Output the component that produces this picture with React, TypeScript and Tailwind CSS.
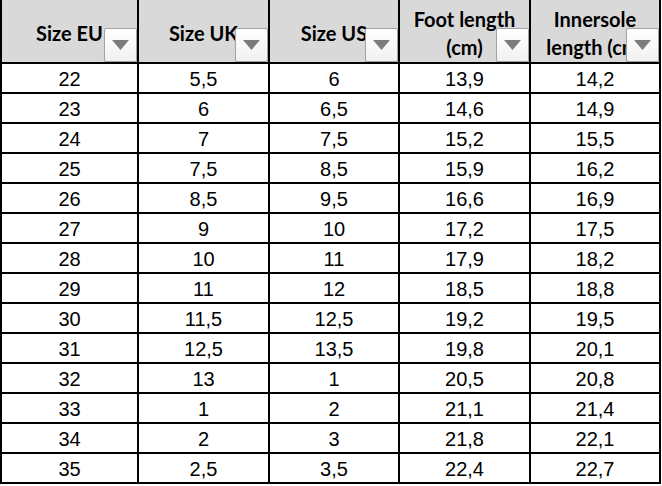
const columns = [
  { label: ["Size EU"], width: "w-[137px]" },
  { label: ["Size UK"], width: "w-[131px]" },
  { label: ["Size US"], width: "w-[130px]" },
  { label: ["Foot length", "(cm)"], width: "w-[131px]" },
  { label: ["Innersole", "length (cm)"], width: "w-[130px]" },
];

const widths = ["w-[137px]", "w-[131px]", "w-[130px]", "w-[131px]", "w-[130px]"];

const rows: string[][] = [
  ["22", "5,5", "6", "13,9", "14,2"],
  ["23", "6", "6,5", "14,6", "14,9"],
  ["24", "7", "7,5", "15,2", "15,5"],
  ["25", "7,5", "8,5", "15,9", "16,2"],
  ["26", "8,5", "9,5", "16,6", "16,9"],
  ["27", "9", "10", "17,2", "17,5"],
  ["28", "10", "11", "17,9", "18,2"],
  ["29", "11", "12", "18,5", "18,8"],
  ["30", "11,5", "12,5", "19,2", "19,5"],
  ["31", "12,5", "13,5", "19,8", "20,1"],
  ["32", "13", "1", "20,5", "20,8"],
  ["33", "1", "2", "21,1", "21,4"],
  ["34", "2", "3", "21,8", "22,1"],
  ["35", "2,5", "3,5", "22,4", "22,7"],
];

function FilterButton() {
  return (
    <div className="absolute right-0 bottom-0 w-[33px] h-[34px] border-[1.5px] border-[#a3a3a3] rounded-[2px] bg-gradient-to-b from-white to-[#f1f1f1] shadow-[0_1px_1px_rgba(0,0,0,0.15)] flex items-center justify-center">
      <svg width="17" height="10" viewBox="0 0 17 10">
        <polygon points="0,0 17,0 8.5,10" fill="#7b7b7b" />
      </svg>
    </div>
  );
}

export default function App() {
  return (
    <div className="w-[662px] h-[486px] bg-white overflow-hidden">
      <div className="border-l-2 border-black w-[661px]">
        <div className="flex bg-[#d9d9d9]">
          {columns.map((col, i) => (
            <div
              key={i}
              className={`${col.width} h-[64px] relative overflow-hidden border-r-2 border-b-2 border-black flex flex-col items-center justify-center pt-[3px] font-['Lato',sans-serif] font-bold text-[20px] leading-[28px] text-black whitespace-nowrap`}
            >
              {col.label.map((line, j) => (
                <span key={j}>{line}</span>
              ))}
              <FilterButton />
            </div>
          ))}
        </div>
        {rows.map((row, r) => (
          <div key={r} className="flex">
            {row.map((cell, c) => (
              <div
                key={c}
                className={`${widths[c]} h-[30px] border-r-2 border-b-2 border-black flex items-center justify-center pt-[2px] font-['Liberation_Sans',Arial,sans-serif] text-[20px] text-black`}
              >
                {cell}
              </div>
            ))}
          </div>
        ))}
      </div>
    </div>
  );
}
